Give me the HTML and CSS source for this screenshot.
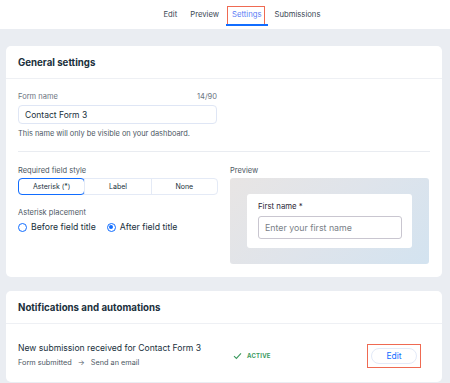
FILE: index.html
```html
<!DOCTYPE html>
<html lang="en">
<head>
    <meta charset="UTF-8">
    <meta name="viewport" content="width=device-width, initial-scale=1.0">
    <title>Form settings</title>
    <link rel="stylesheet" href="styles.css">
</head>
<body>
    <div class="topbar">
        <a class="tab">Edit</a>
        <a class="tab">Preview</a>
        <a class="tab active">Settings<span class="mark"></span></a>
        <a class="tab">Submissions</a>
    </div>

    <div class="page">
        <section class="card">
            <h2 class="card-title">General settings</h2>
            <div class="card-body">
                <div class="field-head">
                    <span>Form name</span>
                    <span>14/90</span>
                </div>
                <div class="text-input">Contact Form 3</div>
                <p class="hint">This name will only be visible on your dashboard.</p>

                <div class="divider"></div>

                <div class="columns">
                    <div class="col">
                        <div class="label">Required field style</div>
                        <div class="segments">
                            <div class="seg selected">Asterisk (*)</div>
                            <div class="seg">Label</div>
                            <div class="seg">None</div>
                        </div>
                        <div class="label second">Asterisk placement</div>
                        <div class="radios">
                            <label class="radio"><span class="dot"></span>Before field title</label>
                            <label class="radio"><span class="dot on"></span>After field title</label>
                        </div>
                    </div>
                    <div class="col">
                        <div class="label">Preview</div>
                        <div class="preview">
                            <div class="preview-card">
                                <div class="preview-label">First name *</div>
                                <div class="preview-input">Enter your first name</div>
                            </div>
                        </div>
                    </div>
                </div>
            </div>
        </section>

        <section class="card">
            <h2 class="card-title">Notifications and automations</h2>
            <div class="card-body row">
                <div class="auto-info">
                    <div class="auto-name">New submission received for Contact Form 3</div>
                    <div class="auto-flow">Form submitted <span class="arrow">&#8594;</span> Send an email</div>
                </div>
                <div class="status">
                    <svg width="9" height="8" viewBox="0 0 9 8"><path d="M1 4.2 L3.4 6.4 L8 1.4" fill="none" stroke="#3c9a5f" stroke-width="1.1"/></svg>
                    ACTIVE
                </div>
                <div class="edit-wrap">
                    <button class="edit-btn">Edit</button>
                </div>
            </div>
        </section>
    </div>
</body>
</html>
```

FILE: styles.css
```css
* {
    box-sizing: border-box;
}
body {
    margin: 0;
    font-family: Inter, "Noto Sans", sans-serif;
    color: #20303c;
    background-color: #eaedf2;
    height: 383px;
    overflow: hidden;
}
.topbar {
    height: 29px;
    background-color: #ffffff;
    display: flex;
    align-items: stretch;
    padding-left: 157px;
}
.tab {
    font-size: 7.7px;
    color: #3b4754;
    padding: 0 6.5px;
    display: flex;
    align-items: center;
    position: relative;
}
.tab.active {
    color: #5b7cf5;
}
.tab.active::after {
    content: "";
    position: absolute;
    left: 0;
    right: 0;
    bottom: 3px;
    height: 2px;
    background-color: #116dff;
}
.mark {
    position: absolute;
    left: 1px;
    right: 3px;
    top: 6px;
    height: 19px;
    border: 1.5px solid #ef6a52;
}
.page {
    padding: 17px 8px 0 6px;
    display: flex;
    flex-direction: column;
    gap: 14px;
}
.card {
    background-color: #ffffff;
    border-radius: 5px;
}
.card-title {
    margin: 0;
    font-size: 9.7px;
    font-weight: 700;
    height: 33px;
    display: flex;
    align-items: center;
    padding-left: 12px;
    border-bottom: 1.5px solid #eef0f4;
}
.card-body {
    padding: 11px 12px 13px 12px;
}
.field-head {
    display: flex;
    justify-content: space-between;
    width: 199px;
    font-size: 7.5px;
    color: #6a7480;
    line-height: 14px;
}
.text-input {
    width: 199px;
    height: 19px;
    border: 1px solid #dfe6f5;
    border-radius: 4px;
    font-size: 8.5px;
    padding-left: 6px;
    display: flex;
    align-items: center;
    margin-top: 1px;
}
.hint {
    margin: 4px 0 0 0;
    font-size: 7.4px;
    color: #4c5763;
    line-height: 12px;
}
.divider {
    height: 1px;
    background-color: #e9ecf1;
    margin: 11px 0 13px 0;
}
.columns {
    display: flex;
    gap: 12px;
}
.col {
    width: 200px;
}
.col:last-child {
    width: 199px;
}
.label {
    font-size: 7.5px;
    color: #4c5763;
    line-height: 12px;
}
.label.second {
    margin-top: 12px;
}
.segments {
    display: flex;
    height: 17px;
    margin-top: 1px;
    border: 1px solid #e4eaf6;
    border-radius: 4px;
}
.seg {
    flex: 1;
    font-size: 7px;
    display: flex;
    align-items: center;
    justify-content: center;
    border-left: 1px solid #e4eaf6;
}
.seg:first-child {
    border-left: none;
}
.seg.selected {
    border: 1px solid #116dff;
    border-radius: 4px;
    margin: -1px;
}
.radios {
    display: flex;
    gap: 11px;
    margin-top: 3px;
}
.radio {
    display: flex;
    align-items: center;
    gap: 4px;
    font-size: 8.7px;
    color: #20303c;
}
.dot {
    width: 9px;
    height: 9px;
    border: 1px solid #116dff;
    border-radius: 50%;
    display: inline-block;
    position: relative;
}
.dot.on::after {
    content: "";
    position: absolute;
    left: 1.5px;
    top: 1.5px;
    width: 4px;
    height: 4px;
    border-radius: 50%;
    background-color: #116dff;
}
.preview {
    margin-top: 1px;
    height: 86px;
    border-radius: 3px;
    background: linear-gradient(135deg, #e8e5e4 0%, #dfe4eb 50%, #d3e3f0 100%);
    padding: 16px 17px 16px 17px;
}
.preview-card {
    background-color: #ffffff;
    border-radius: 3px;
    height: 54px;
    padding: 7px 10px 0 11px;
}
.preview-label {
    font-size: 7.8px;
    color: #2c2836;
    line-height: 11px;
}
.preview-input {
    margin-top: 4px;
    height: 23px;
    border: 1px solid #c9c6d0;
    border-radius: 3px;
    font-size: 8.8px;
    color: #7a7f88;
    padding-left: 6px;
    display: flex;
    align-items: center;
}
.row {
    display: flex;
    align-items: center;
    padding-top: 18px;
}
.auto-info {
    width: 215px;
}
.auto-name {
    font-size: 8.6px;
    line-height: 13px;
}
.auto-flow {
    font-size: 7.3px;
    color: #4c5763;
    line-height: 13px;
    margin-top: 1px;
}
.arrow {
    margin: 0 4px;
}
.status {
    display: flex;
    align-items: center;
    gap: 5px;
    font-size: 6px;
    font-weight: 700;
    color: #3c9a5f;
    letter-spacing: 0.2px;
}
.edit-wrap {
    margin-left: auto;
    margin-right: 9px;
    border: 1.5px solid #ef6a52;
    padding: 3px;
}
.edit-btn {
    font-family: Inter, "Noto Sans", sans-serif;
    font-size: 8.5px;
    color: #116dff;
    background-color: #ffffff;
    border: 1px solid #e3eaf8;
    border-radius: 10px;
    width: 46px;
    height: 16px;
    padding: 0;
    display: block;
}
```
